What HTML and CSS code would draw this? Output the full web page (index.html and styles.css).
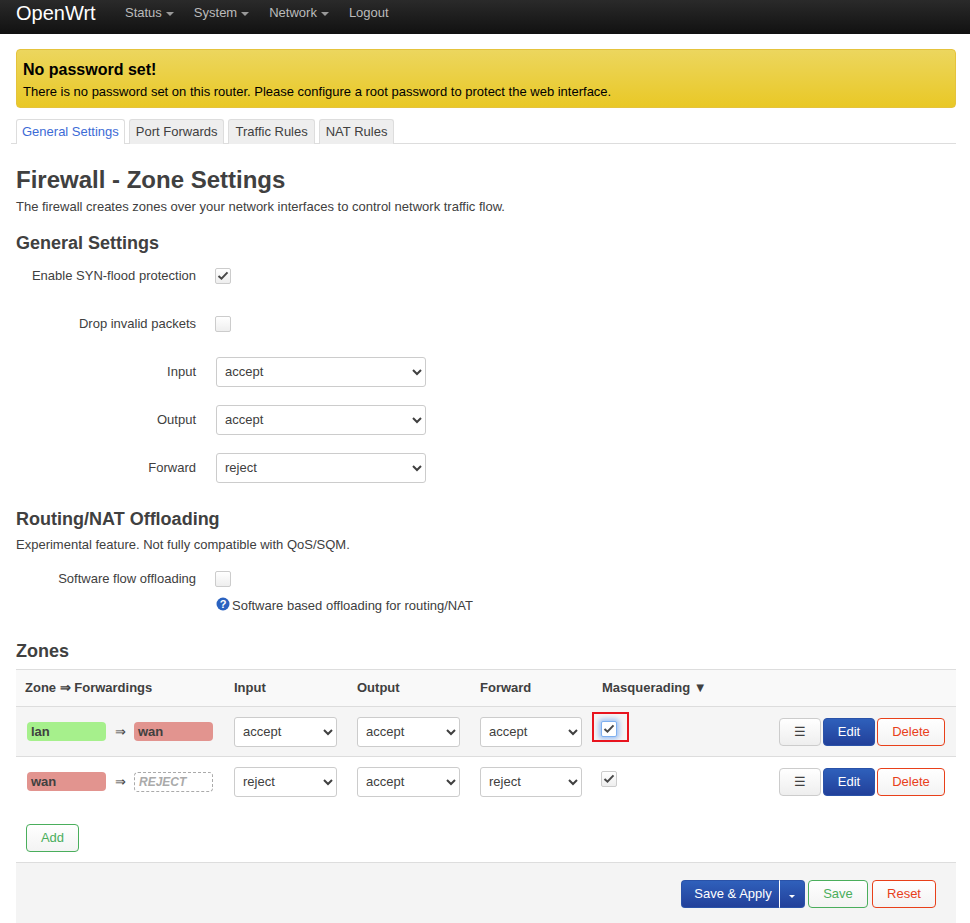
FILE: index.html
```html
<!DOCTYPE html>
<html lang="en">
<head>
<meta charset="utf-8">
<title>Firewall - Zone Settings</title>
<link rel="stylesheet" href="styles.css">
</head>
<body>
<header class="navbar">
  <a class="brand">OpenWrt</a>
  <nav class="menu">
    <a class="menu-item">Status<i class="caret"></i></a>
    <a class="menu-item">System<i class="caret"></i></a>
    <a class="menu-item">Network<i class="caret"></i></a>
    <a class="menu-item">Logout</a>
  </nav>
</header>
<main class="page">
  <div class="alert">
    <h4 class="alert-title">No password set!</h4>
    <p class="alert-text">There is no password set on this router. Please configure a root password to protect the web interface.</p>
  </div>
  <ul class="tabs">
    <li class="tab active">General Settings</li>
    <li class="tab">Port Forwards</li>
    <li class="tab">Traffic Rules</li>
    <li class="tab">NAT Rules</li>
  </ul>
  <h2 class="title">Firewall - Zone Settings</h2>
  <p class="desc">The firewall creates zones over your network interfaces to control network traffic flow.</p>

  <h3 class="section first">General Settings</h3>
  <div class="row"><label class="row-label">Enable SYN-flood protection</label><span class="cb-wrap"><span class="cb"><svg class="tick" viewBox="0 0 16 16"><path d="M3.5 7.9l3 2.8 6-6.3"/></svg></span></span></div>
  <div class="row"><label class="row-label">Drop invalid packets</label><span class="cb-wrap"><span class="cb"></span></span></div>
  <div class="row"><label class="row-label">Input</label><select class="sel wide"><option>accept</option></select></div>
  <div class="row"><label class="row-label">Output</label><select class="sel wide"><option>accept</option></select></div>
  <div class="row"><label class="row-label">Forward</label><select class="sel wide"><option>reject</option></select></div>

  <h3 class="section">Routing/NAT Offloading</h3>
  <p class="section-desc">Experimental feature. Not fully compatible with QoS/SQM.</p>
  <div class="row short"><label class="row-label">Software flow offloading</label><span class="cb-wrap"><span class="cb"></span></span></div>
  <div class="hint"><svg class="help" viewBox="0 0 14 14"><circle cx="7" cy="7" r="6.5"/><text x="7" y="10.8" text-anchor="middle">?</text></svg>Software based offloading for routing/NAT</div>

  <h3 class="section zones">Zones</h3>
  <table class="table">
    <thead>
      <tr>
        <th class="c-zone">Zone ⇒ Forwardings</th>
        <th class="c-sel">Input</th>
        <th class="c-sel">Output</th>
        <th class="c-sel">Forward</th>
        <th class="c-mq">Masquerading ▼</th>
        <th></th>
      </tr>
    </thead>
    <tbody>
      <tr class="alt">
        <td class="zone-cell"><div class="zone-line"><span class="badge green">lan</span><span class="arrow">⇒</span><span class="badge red">wan</span></div></td>
        <td><select class="sel"><option>accept</option></select></td>
        <td><select class="sel"><option>accept</option></select></td>
        <td><select class="sel narrow"><option>accept</option></select></td>
        <td class="mq-cell"><span class="cb focus"><svg class="tick" viewBox="0 0 16 16"><path d="M3.5 7.9l3 2.8 6-6.3"/></svg></span><span class="marker"></span></td>
        <td class="act"><button class="btn plain">☰</button><button class="btn blue">Edit</button><button class="btn del">Delete</button></td>
      </tr>
      <tr>
        <td class="zone-cell"><div class="zone-line"><span class="badge red">wan</span><span class="arrow">⇒</span><span class="badge dashed">REJECT</span></div></td>
        <td><select class="sel"><option>reject</option></select></td>
        <td><select class="sel"><option>accept</option></select></td>
        <td><select class="sel narrow"><option>reject</option></select></td>
        <td class="mq-cell"><span class="cb"><svg class="tick" viewBox="0 0 16 16"><path d="M3.5 7.9l3 2.8 6-6.3"/></svg></span></td>
        <td class="act"><button class="btn plain">☰</button><button class="btn blue">Edit</button><button class="btn del">Delete</button></td>
      </tr>
    </tbody>
  </table>
  <div class="add-row"><button class="btn add">Add</button></div>
  <footer class="actions">
    <div class="split"><button class="btn blue split-main">Save &amp; Apply</button><button class="btn blue split-caret"><i class="caret white"></i></button></div>
    <button class="btn add save">Save</button>
    <button class="btn del reset">Reset</button>
  </footer>
</main>
</body>
</html>
```
FILE: styles.css
```css
* { box-sizing: border-box; }
html, body { margin: 0; height: 923px; overflow: hidden; }
body { font-family: "Liberation Sans", Arial, sans-serif; font-size: 13px; line-height: 18px; color: #404040; background: #fff; }

.navbar { height: 34px; background: linear-gradient(#2a2a2a, #111); display: flex; align-items: flex-start; padding-left: 16px; }
.brand { color: #fff; font-size: 20px; line-height: 26px; width: 109px; }
.menu { display: flex; }
.menu-item { color: #bbb; font-size: 13px; line-height: 26px; margin-right: 20px; display: flex; align-items: center; }
.caret { display: inline-block; width: 0; height: 0; margin-left: 4px; margin-top: 2px; border-left: 4px solid transparent; border-right: 4px solid transparent; border-top: 4px solid #999; }
.caret.white { border-top-color: #fff; margin: 0; border-left-width: 3px; border-right-width: 3px; border-top-width: 3px; }

.page { padding: 0 14px 0 16px; }
.alert { margin-top: 15px; height: 59px; padding: 8px 6px 0; border: 1px solid #e5c33c; border-radius: 4px; background: linear-gradient(#ecd65e, #e9c826); color: #000; }
.alert-title { margin: 0; font-size: 16px; line-height: 24px; font-weight: bold; }
.alert-text { margin: 0; font-size: 13px; line-height: 20px; }

.tabs { list-style: none; margin: 11px 0 0 -5px; padding: 0 0 0 5px; display: flex; gap: 4px; height: 25px; border-bottom: 1px solid #ddd; }
.tab { height: 25px; padding: 3px 6px 0; border: 1px solid #ddd; border-bottom: 0; border-radius: 3px 3px 0 0; background: #eee; color: #404040; }
.tab.active { background: #fff; color: #3d6bd6; padding: 3px 5px 0; }

.title { margin: 24px 0 0; font-size: 24px; line-height: 24px; font-weight: bold; }
.desc { margin: 7px 0 0; font-size: 13px; line-height: 16px; }

.section { margin: 0; font-size: 18px; line-height: 24px; font-weight: bold; }
.section.first { margin-top: 16px; }
.row + .section { margin-top: 24px; }
.section.zones { margin-top: 23px; }
.section-desc { margin: 6px 0 0; font-size: 13px; line-height: 16px; }

.row { height: 30px; margin-top: 18px; display: flex; align-items: center; }
.section + .row { margin-top: 6px; }
.row.short { margin-top: 11px; height: 30px; }
.row-label { width: 180px; text-align: right; margin-right: 20px; }
.cb-wrap { display: flex; margin-left: -1px; margin-top: -1px; }
.cb { position: relative; display: inline-block; width: 16px; height: 16px; border: 1px solid #ccc; border-radius: 2px; background: linear-gradient(#fff, #eee); }
.cb.focus { border-color: #7fb0f0; box-shadow: 0 0 5px 2px rgba(82,148,240,.55); background: #fff; }
.tick { position: absolute; left: -1px; top: -1px; width: 16px; height: 16px; fill: none; stroke: #484848; stroke-width: 2; }

.sel { width: 103px; height: 30px; padding: 0 0 1px 4px; border: 1px solid #ccc; border-radius: 3px; background: #fff; color: #404040; font: 13px "Liberation Sans", Arial, sans-serif; }
.sel.wide { width: 210px; }
.sel.narrow { width: 102px; }

.hint { margin: 2px 0 0 200px; display: flex; align-items: center; font-size: 13px; line-height: 20px; white-space: nowrap; }
.help { width: 14px; height: 14px; margin-right: 2px; margin-top: -5px; }
.help circle { fill: #2a62c0; }
.help text { fill: #fff; font: bold 11px "Liberation Sans", Arial, sans-serif; }

.table { width: 940px; margin-top: 6px; border-collapse: collapse; table-layout: fixed; }
.table th { height: 37px; padding: 0 9px; text-align: left; font-size: 13px; background: #f9f9f9; border-top: 1px solid #ddd; border-bottom: 1px solid #ddd; }
.c-zone { width: 209px; }
.c-sel { width: 123px; }
.c-mq { width: 177px; padding-left: 8px !important; }
.table td { height: 50px; padding: 0 9px; border-bottom: 1px solid #ddd; vertical-align: middle; }
.table tbody tr:last-child td { border-bottom: 0; }
.table tr.alt td { background: #f5f5f5; }
.zone-cell { padding-left: 11px !important; padding-right: 0 !important; }
.zone-line { display: flex; align-items: center; }
.badge { width: 79px; height: 19px; padding: 0 4px; line-height: 19px; border-radius: 4px; font-size: 13px; font-weight: bold; color: #404040; }
.badge.green { background: #a6f08c; }
.badge.red { background: #e2948f; }
.badge.dashed { height: 20px; padding: 0 4px; border: 1px dashed #aaa; color: #aaa; font-style: italic; font-size: 12px; background: #fff; line-height: 18px; }
.arrow { width: 28px; text-align: center; font-size: 13px; }
.mq-cell { position: relative; padding-left: 7px !important; padding-bottom: 6px !important; }
.mq-cell .cb { display: block; }
.marker { position: absolute; left: -2px; top: 5px; width: 37px; height: 30px; border: 2px solid #e8141e; }
.act { text-align: right; padding: 0 11px 0 0 !important; white-space: nowrap; }

.btn { display: inline-block; height: 28px; padding: 0; margin: 0 0 0 2px; border: 1px solid #ccc; border-radius: 4px; font: 13px "Liberation Sans", Arial, sans-serif; cursor: pointer; background: linear-gradient(#fff, #eee); color: #404040; vertical-align: middle; }
.btn.plain { width: 42px; }
.btn.blue { width: 52px; color: #fff; border-color: #2a52a8; background: linear-gradient(#2f60bb, #22409a); }
.btn.del { width: 68px; color: #e8401a; border-color: #e8401a; background: linear-gradient(#fff, #f3f3f3); }
.btn.add { width: 53px; margin: 0; color: #4aae5c; border-color: #4aae5c; background: linear-gradient(#fff, #f3f3f3); }

.add-row { padding: 17px 0 0 10px; height: 56px; border-bottom: 1px solid #ddd; }
.actions { width: 940px; height: 70px; padding: 17px 20px 0 0; background: #f4f4f4; display: flex; justify-content: flex-end; gap: 3px; }
.split { display: flex; }
.split .btn { margin: 0; }
.btn.split-main { width: 99px; padding-left: 5px; border-radius: 4px 0 0 4px; border-right: 1px solid #fff; }
.btn.split-caret { width: 25px; border-radius: 0 4px 4px 0; border-left: 0; }
.btn.save { width: 60px; }
.btn.reset { width: 64px; margin-left: 1px; }
```
